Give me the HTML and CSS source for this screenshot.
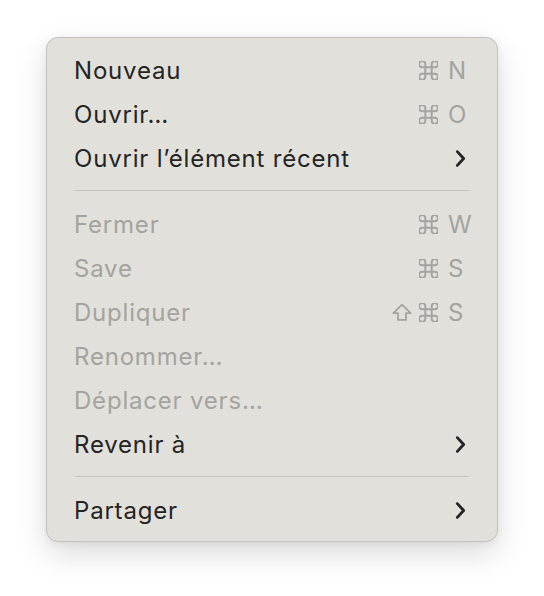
FILE: index.html
```html
<!DOCTYPE html>
<html lang="fr">
<head>
<meta charset="utf-8">
<link rel="stylesheet" href="styles.css">
</head>
<body>
<div class="menu">
  <div class="item"><span class="label">Nouveau</span><span class="sc"><span class="mods"><svg class="cmd" viewBox="3 3 18 18"><path d="M15 6v12a3 3 0 1 0 3-3H6a3 3 0 1 0 3 3V6a3 3 0 1 0-3 3h12a3 3 0 1 0-3-3"/></svg></span><span class="key">N</span></span></div>
  <div class="item"><span class="label">Ouvrir…</span><span class="sc"><span class="mods"><svg class="cmd" viewBox="3 3 18 18"><path d="M15 6v12a3 3 0 1 0 3-3H6a3 3 0 1 0 3 3V6a3 3 0 1 0-3 3h12a3 3 0 1 0-3-3"/></svg></span><span class="key">O</span></span></div>
  <div class="item"><span class="label">Ouvrir l’élément récent</span><svg class="chev" viewBox="0 0 10 18"><path d="M2 2.5l6 6.5-6 6.5"/></svg></div>
  <div class="sep"></div>
  <div class="item off"><span class="label">Fermer</span><span class="sc"><span class="mods"><svg class="cmd" viewBox="3 3 18 18"><path d="M15 6v12a3 3 0 1 0 3-3H6a3 3 0 1 0 3 3V6a3 3 0 1 0-3 3h12a3 3 0 1 0-3-3"/></svg></span><span class="key">W</span></span></div>
  <div class="item off"><span class="label">Save</span><span class="sc"><span class="mods"><svg class="cmd" viewBox="3 3 18 18"><path d="M15 6v12a3 3 0 1 0 3-3H6a3 3 0 1 0 3 3V6a3 3 0 1 0-3 3h12a3 3 0 1 0-3-3"/></svg></span><span class="key">S</span></span></div>
  <div class="item off"><span class="label">Dupliquer</span><span class="sc"><span class="mods"><svg class="shift" viewBox="0 0 20 18"><path d="M10 1.5L1.8 9.6h4.4v6.4h7.6V9.6h4.4z"/></svg><svg class="cmd" viewBox="3 3 18 18"><path d="M15 6v12a3 3 0 1 0 3-3H6a3 3 0 1 0 3 3V6a3 3 0 1 0-3 3h12a3 3 0 1 0-3-3"/></svg></span><span class="key">S</span></span></div>
  <div class="item off"><span class="label">Renommer…</span></div>
  <div class="item off"><span class="label">Déplacer vers…</span></div>
  <div class="item"><span class="label">Revenir à</span><svg class="chev" viewBox="0 0 10 18"><path d="M2 2.5l6 6.5-6 6.5"/></svg></div>
  <div class="sep"></div>
  <div class="item"><span class="label">Partager</span><svg class="chev" viewBox="0 0 10 18"><path d="M2 2.5l6 6.5-6 6.5"/></svg></div>
</div>
</body>
</html>
```
FILE: styles.css
```css
html, body {
  margin: 0;
  background: #ffffff;
}
body {
  min-height: 596px;
  box-sizing: border-box;
  padding: 37px 0 0 46px;
  font-family: Inter, "Liberation Sans", sans-serif;
}
.menu {
  box-sizing: border-box;
  width: 452px;
  height: 505px;
  background: #e2e0db;
  border: 1px solid #c3c1bd;
  border-radius: 12px;
  padding: 10px 0 9px;
  box-shadow: 0 12px 32px rgba(0, 0, 0, 0.14), 0 2px 8px rgba(0, 0, 0, 0.06);
}
.item {
  display: flex;
  align-items: center;
  height: 44px;
  padding: 0 28px 0 27px;
  font-size: 24px;
  letter-spacing: 0.8px;
  color: #242424;
}
.item.off {
  color: #a4a39f;
}
.label {
  flex: 1;
  white-space: nowrap;
}
.sc {
  display: flex;
  align-items: center;
  color: #a4a39f;
}
.mods {
  display: flex;
  align-items: center;
  gap: 6px;
}
.key {
  width: 21px;
  margin-left: 10px;
  margin-right: 0;
  letter-spacing: 0;
}
.cmd {
  width: 19px;
  height: 19px;
  fill: none;
  stroke: currentColor;
  stroke-width: 1.9;
}
.shift {
  width: 22px;
  height: 19px;
  fill: none;
  stroke: currentColor;
  stroke-width: 1.7;
  stroke-linejoin: round;
}
.chev {
  width: 11px;
  height: 19px;
  margin-right: 3px;
  fill: none;
  stroke: #242424;
  stroke-width: 2.7;
  stroke-linecap: round;
  stroke-linejoin: round;
}
.sep {
  height: 1px;
  background: #c7c5c1;
  margin: 10px 28px 11px 28px;
}
```
